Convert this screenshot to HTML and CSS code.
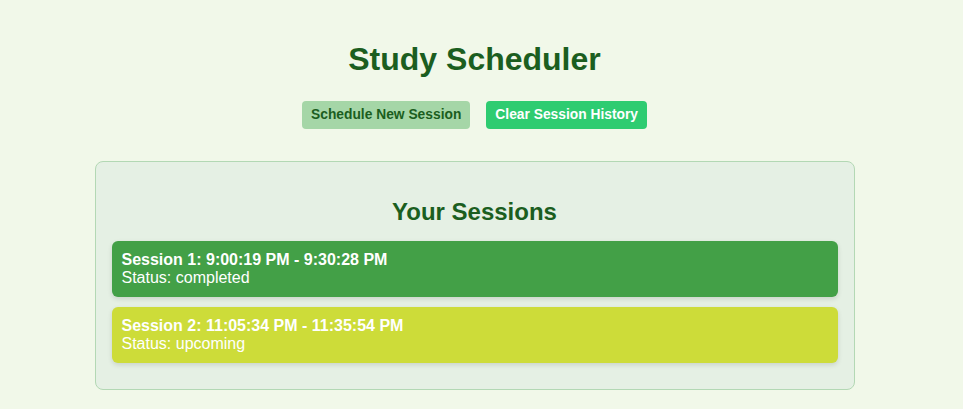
FILE: index.html
```
<!DOCTYPE html>
<html lang="en">
<head>
  <meta charset="UTF-8">
  <meta name="viewport" content="width=device-width, initial-scale=1.0">
  <title>Study Scheduler</title>
  <link rel="stylesheet" href="styles.css">
</head>
<body>

  <h1>Study Scheduler</h1>
  <div class="actions">
    <button class="btn btn-schedule">Schedule New Session</button>
    <button class="btn btn-clear">Clear Session History</button>
  </div>

  <div class="container">
    <h2>Your Sessions</h2>
    <div class="session completed">
      <strong>Session 1: 9:00:19 PM - 9:30:28 PM</strong><br>
      Status: completed
    </div>
    <div class="session upcoming">
      <strong>Session 2: 11:05:34 PM - 11:35:54 PM</strong><br>
      Status: upcoming
    </div>
  </div>

</body>
</html>
```

FILE: styles.css
```
body {
  font-family: "Liberation Sans", Arial, sans-serif;
  background-color: #f1f8e9;
  margin: 0;
  padding: 20px 34px 20px 20px;
  text-align: center;
}
h1 {
  color: #1b5e20;
  font-size: 32px;
  margin: 21px 0 23px;
  line-height: 37px;
}
h2 {
  color: #1b5e20;
  font-size: 24px;
  line-height: 28px;
  margin: 20px 0 15px;
}
.actions {
  display: flex;
  justify-content: center;
  gap: 16px;
  margin-bottom: 32px;
}
.btn {
  font-family: inherit;
  font-size: 13.8px;
  font-weight: bold;
  border: none;
  border-radius: 4px;
  padding: 6px 9px;
  line-height: 16px;
  cursor: pointer;
}
.btn-schedule {
  background-color: #a5d6a7;
  color: #1b5e20;
}
.btn-clear {
  background-color: #2ecc71;
  color: white;
}
.container {
  box-sizing: border-box;
  max-width: 760px;
  margin: 0 auto;
  padding: 16px;
  background-color: #e5f0e4;
  border: 1px solid #b3d8b4;
  border-radius: 8px;
}
.session {
  text-align: left;
  color: white;
  font-size: 16px;
  line-height: 18px;
  padding: 10px;
  margin-bottom: 10px;
  border-radius: 6px;
  box-shadow: 0 2px 5px rgba(0, 0, 0, 0.12);
}
.session.completed {
  background-color: #43a047;
}
.session.upcoming {
  background-color: #cddc39;
}
```
